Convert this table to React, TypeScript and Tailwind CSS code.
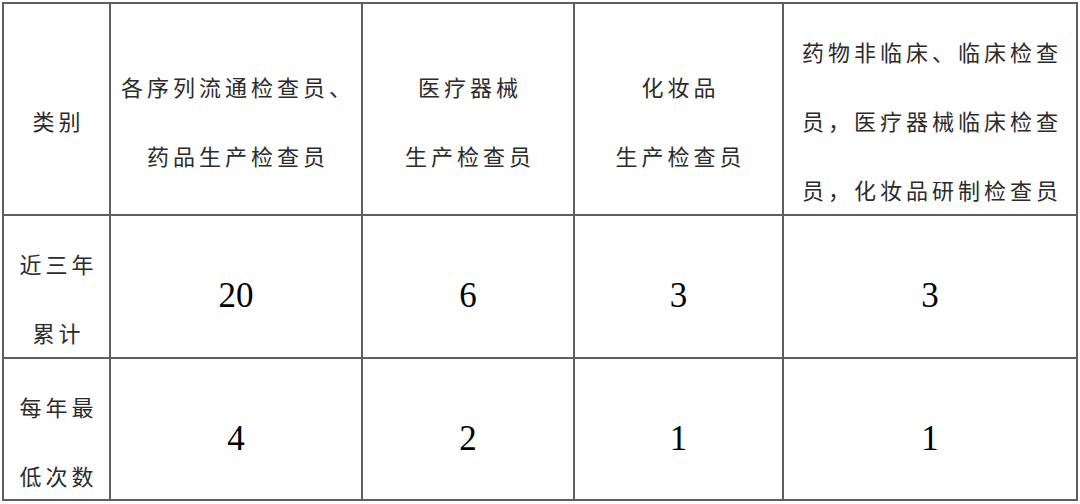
import React from "react";

const cjk = {
  fontFamily: '"Noto Sans CJK SC", "Noto Sans", sans-serif',
};
const num = {
  fontFamily: '"Liberation Serif", "Times New Roman", serif',
};

function TextCell({ lines, last }: { lines: string[]; last?: boolean }) {
  return (
    <div
      className={`flex flex-col items-center justify-center pt-[23px] border-b-2 border-[#5e5e5e] ${
        last ? "border-r-2" : "border-r-2"
      } text-[22px] leading-[69px] tracking-[4px] pl-[4px] text-[#2b2b2b] whitespace-nowrap`}
      style={cjk}
    >
      {lines.map((l, i) => (
        <div key={i}>{l}</div>
      ))}
    </div>
  );
}

function NumCell({ v }: { v: string }) {
  return (
    <div
      className="flex items-center justify-center pt-[18px] border-r-2 border-b-2 border-[#5e5e5e] text-[35px] leading-none text-black"
      style={num}
    >
      {v}
    </div>
  );
}

export default function App() {
  return (
    <div className="w-[1080px] h-[504px] bg-white overflow-hidden">
      <div className="ml-[2px] mt-[2px] w-[1076px] border-l-2 border-t-2 border-[#5e5e5e] grid grid-cols-[107px_252px_212px_209px_294px] grid-rows-[212px_143px_142px]">
        <TextCell lines={["类别"]} />
        <TextCell lines={["各序列流通检查员、", "药品生产检查员"]} />
        <TextCell lines={["医疗器械", "生产检查员"]} />
        <TextCell lines={["化妆品", "生产检查员"]} />
        <TextCell
          lines={["药物非临床、临床检查", "员，医疗器械临床检查", "员，化妆品研制检查员"]}
        />

        <TextCell lines={["近三年", "累计"]} />
        <NumCell v="20" />
        <NumCell v="6" />
        <NumCell v="3" />
        <NumCell v="3" />

        <TextCell lines={["每年最", "低次数"]} />
        <NumCell v="4" />
        <NumCell v="2" />
        <NumCell v="1" />
        <NumCell v="1" />
      </div>
    </div>
  );
}
